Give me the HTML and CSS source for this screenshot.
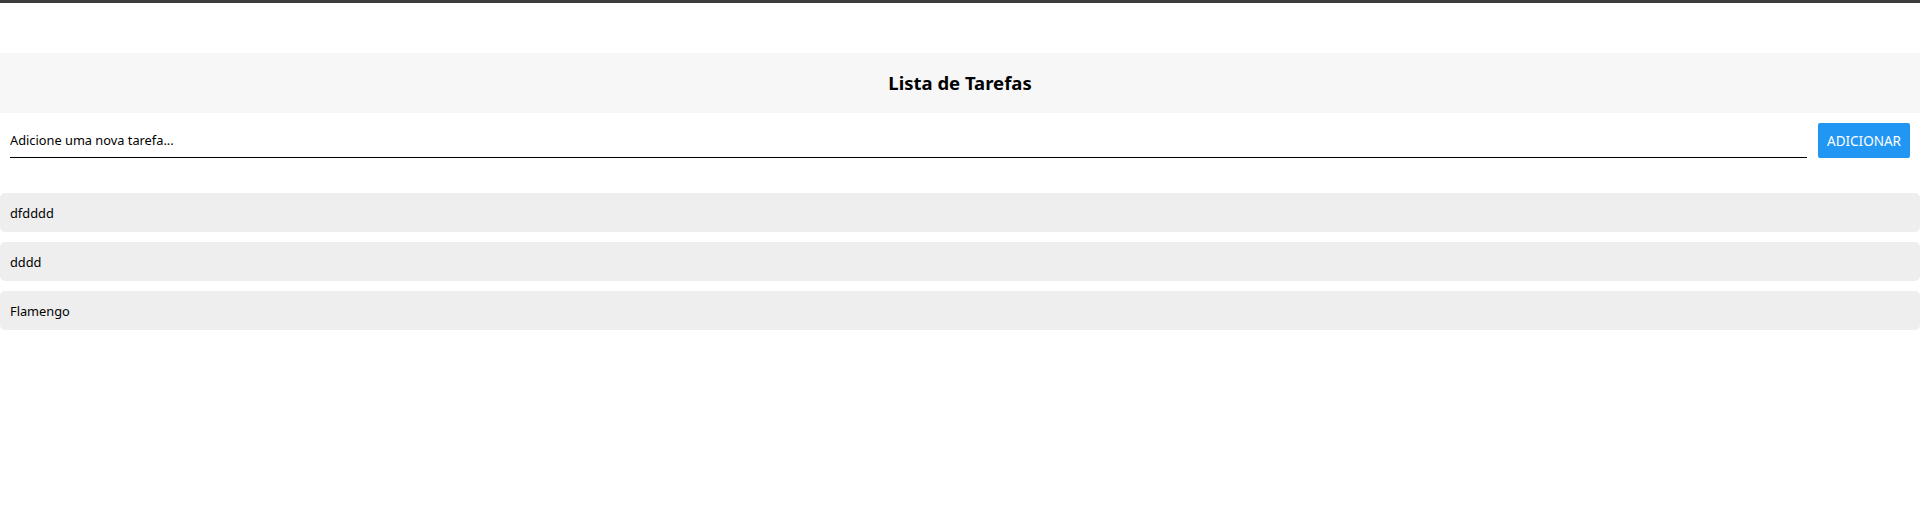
FILE: index.html
```html
<!DOCTYPE html>
<html lang="pt">
<head>
<meta charset="utf-8">
<title>Lista de Tarefas</title>
<link rel="stylesheet" href="styles.css">
</head>
<body>
<div class="app">
  <header class="header">
    <h1 class="title">Lista de Tarefas</h1>
  </header>
  <form class="form">
    <input class="input" type="text" placeholder="Adicione uma nova tarefa...">
    <button class="button" type="button">ADICIONAR</button>
  </form>
  <ul class="list">
    <li class="task">dfdddd</li>
    <li class="task">dddd</li>
    <li class="task">Flamengo</li>
  </ul>
</div>
</body>
</html>
```

FILE: styles.css
```css
html, body {
  margin: 0;
  padding: 0;
  background: #ffffff;
}
body {
  border-top: 3px solid #3c3c3c;
  font-family: "Noto Sans", "Open Sans", sans-serif;
  color: #000;
}
.app {
  padding-top: 50px;
}
.header {
  height: 60px;
  background: #f7f7f7;
  display: flex;
  align-items: center;
  justify-content: center;
}
.title {
  margin: 0;
  font-size: 18.5px;
  font-weight: 700;
  line-height: 1;
}
.form {
  display: flex;
  gap: 11px;
  padding: 10px 10px 0 10px;
  margin: 0;
}
.input {
  flex: 1;
  height: 35px;
  box-sizing: border-box;
  border: none;
  border-bottom: 1px solid #000;
  padding: 0;
  font-family: inherit;
  font-size: 12.8px;
  color: #000;
  outline: none;
  background: transparent;
}
.input::placeholder {
  color: #000;
  opacity: 1;
}
.button {
  width: 92px;
  height: 35px;
  border: none;
  border-radius: 2px;
  background: #2196f3;
  color: #fff;
  font-family: inherit;
  font-size: 13.5px;
  padding: 0;
}
.list {
  list-style: none;
  margin: 35px 0 0 0;
  padding: 0;
  display: flex;
  flex-direction: column;
  gap: 10px;
}
.task {
  height: 39px;
  box-sizing: border-box;
  display: flex;
  align-items: center;
  padding-left: 10px;
  background: #eeeeee;
  border-radius: 5px;
  font-size: 12.8px;
}
```
